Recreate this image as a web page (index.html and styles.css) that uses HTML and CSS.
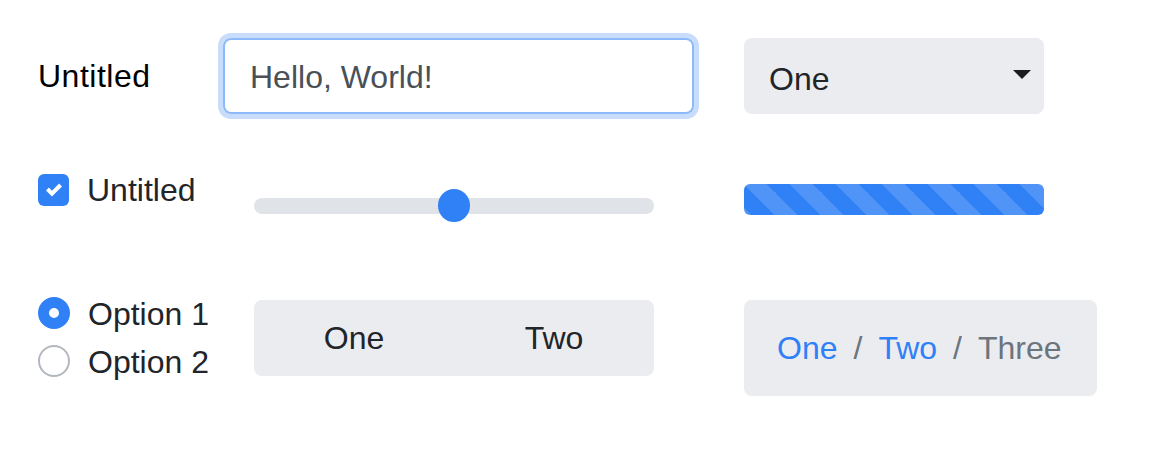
FILE: index.html
```html
<!DOCTYPE html>
<html>
<head>
<meta charset="utf-8">
<link rel="stylesheet" href="styles.css">
</head>
<body>
<div class="page">
  <div class="row row1">
    <div class="label">Untitled</div>
    <div class="input">Hello, World!</div>
    <div class="select">
      <span class="sel-text">One</span>
      <svg class="caret" width="18" height="9" viewBox="0 0 18 9"><path d="M0 0H18L9 9Z" fill="#1c1c1e"/></svg>
    </div>
  </div>
  <div class="row row2">
    <div class="check">
      <span class="box">
        <svg width="16" height="16" viewBox="0 0 8 8"><path fill="#fff" d="M6.564.75l-3.59 3.612-1.538-1.55L0 4.26 2.974 7.25 8 2.193z"/></svg>
      </span>
      <span class="text">Untitled</span>
    </div>
    <div class="slider"><div class="track"></div><div class="thumb"></div></div>
    <div class="progress"></div>
  </div>
  <div class="row row3">
    <div class="radios">
      <div class="radio"><span class="dot on"></span><span class="text">Option 1</span></div>
      <div class="radio"><span class="dot"></span><span class="text">Option 2</span></div>
    </div>
    <div class="segmented"><div class="seg">One</div><div class="seg">Two</div></div>
    <div class="crumbs">
      <span class="link">One</span><span class="sep">/</span><span class="link">Two</span><span class="sep">/</span><span class="active">Three</span>
    </div>
  </div>
</div>
</body>
</html>
```

FILE: styles.css
```css
html, body {
  margin: 0;
  padding: 0;
  background: #fff;
}
body {
  font-family: "Liberation Sans", Arial, sans-serif;
  font-size: 32px;
  color: #212529;
}
.page {
  padding-left: 38px;
}
.row {
  display: flex;
}
.row1 {
  margin-top: 38px;
  height: 76px;
  align-items: center;
}
.label {
  width: 185px;
  color: #000;
  line-height: 48px;
  letter-spacing: 0.5px;
}
.input {
  box-sizing: border-box;
  width: 471px;
  height: 76px;
  border: 2px solid #8cb9f8;
  border-radius: 8px;
  box-shadow: 0 0 0 5px #c8dcfb;
  padding: 3px 24px 0 25px;
  line-height: 69px;
  color: #495057;
}
.select {
  box-sizing: border-box;
  margin-left: 50px;
  width: 300px;
  height: 76px;
  border-radius: 8px;
  background: #ebecf0;
  display: flex;
  align-items: center;
  justify-content: space-between;
  padding: 0 13px 0 25px;
}
.sel-text {
  padding-top: 6px;
}
.caret {
  display: block;
  margin-top: -4px;
}
.row2 {
  margin-top: 52px;
  align-items: flex-start;
}
.check {
  width: 216px;
  height: 48px;
  display: flex;
  align-items: center;
}
.box {
  width: 31px;
  height: 32px;
  border-radius: 6px;
  background: #3080f6;
  display: flex;
  align-items: center;
  justify-content: center;
  margin-right: 18px;
}
.box svg {
  display: block;
}
.text {
  line-height: 48px;
}
.slider {
  position: relative;
  width: 400px;
  height: 32px;
  margin-top: 23px;
}
.track {
  position: absolute;
  left: 0;
  right: 0;
  top: 9px;
  height: 16px;
  border-radius: 8px;
  background: #e0e3e7;
}
.thumb {
  position: absolute;
  left: 184px;
  top: 0;
  width: 32px;
  height: 33px;
  border-radius: 50%;
  background: #3080f6;
}
.progress {
  margin-left: 90px;
  margin-top: 18px;
  width: 300px;
  height: 31px;
  border-radius: 6px;
  background-color: #3080f6;
  background-image: linear-gradient(45deg, rgba(255,255,255,.16) 25%, transparent 25%, transparent 50%, rgba(255,255,255,.16) 50%, rgba(255,255,255,.16) 75%, transparent 75%, transparent);
  background-size: 46px 46px;
}
.row3 {
  margin-top: 69px;
  align-items: flex-start;
}
.radios {
  width: 216px;
}
.radio {
  display: flex;
  align-items: center;
  height: 48px;
}
.dot {
  box-sizing: border-box;
  width: 32px;
  height: 32px;
  border-radius: 50%;
  border: 2px solid #b3b8bf;
  background: #fff;
  margin-right: 18px;
  margin-top: -3px;
}
.dot.on {
  border: 11px solid #3080f6;
}
.segmented {
  margin-top: 10px;
  width: 400px;
  height: 76px;
  border-radius: 8px;
  background: #ebecf0;
  display: flex;
}
.seg {
  flex: 1;
  display: flex;
  align-items: center;
  justify-content: center;
}
.crumbs {
  margin-left: 90px;
  margin-top: 10px;
  padding: 24px 35px 24px 33px;
  line-height: 48px;
  border-radius: 8px;
  background: #ebecf0;
  display: flex;
}
.link {
  color: #3080f6;
}
.sep {
  color: #6c757d;
  padding: 0 16px;
}
.active {
  color: #6c757d;
}
```
